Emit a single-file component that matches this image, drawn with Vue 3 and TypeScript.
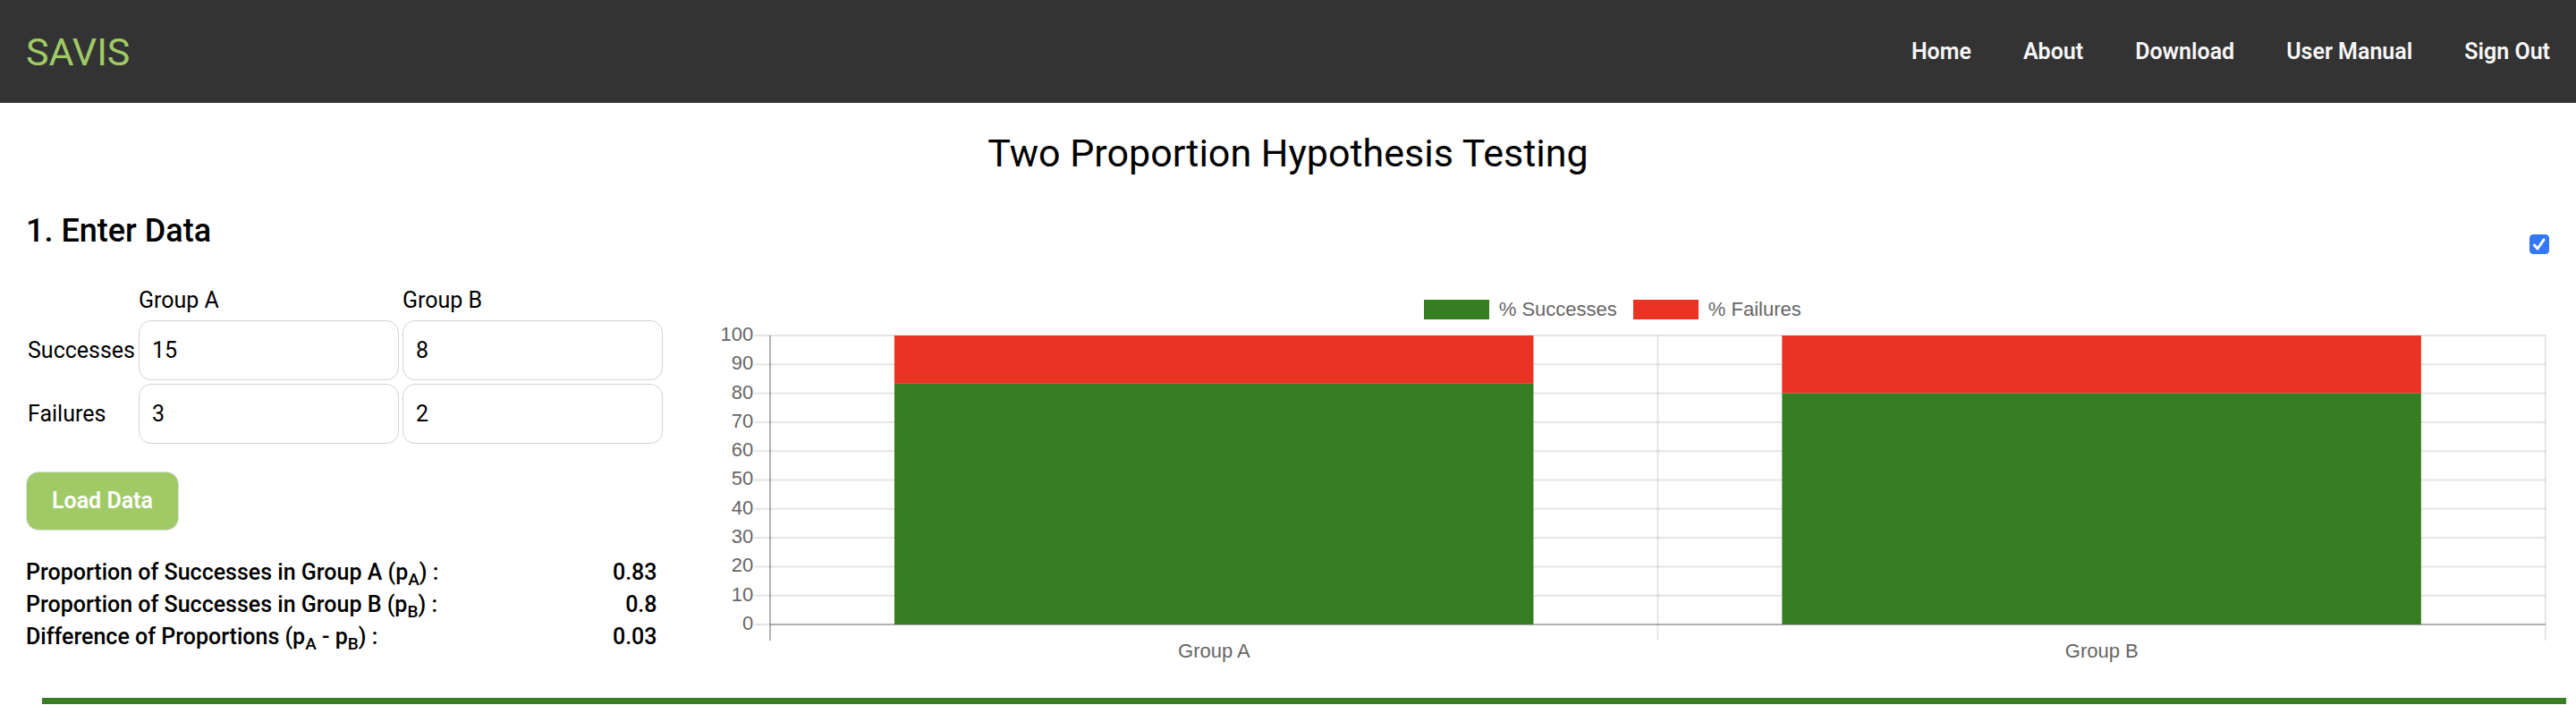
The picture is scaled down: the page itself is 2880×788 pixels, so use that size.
<script setup lang="ts">
import { computed, reactive, ref } from 'vue'

interface Group {
  name: string
  successes: number
  failures: number
}

const links = ['Home', 'About', 'Download', 'User Manual', 'Sign Out']

const groups = reactive<Group[]>([
  { name: 'Group A', successes: 15, failures: 3 },
  { name: 'Group B', successes: 8, failures: 2 },
])
const loaded = ref<Group[]>(groups.map((g) => ({ ...g })))
const showChart = ref(true)

function loadData(): void {
  loaded.value = groups.map((g) => ({ ...g }))
}

function proportion(g: Group): number {
  const total = g.successes + g.failures
  return total ? g.successes / total : 0
}

const round = (n: number): number => Math.round(n * 100) / 100
const pA = computed(() => proportion(loaded.value[0]))
const pB = computed(() => proportion(loaded.value[1]))

const ticks = [100, 90, 80, 70, 60, 50, 40, 30, 20, 10, 0]

// Each category fills half of the plot; its bar takes 72% of that half.
const bars = computed(() =>
  loaded.value.map((g, i) => ({
    name: g.name,
    x: `${i * 50 + 7}%`,
    rest: `${100 - proportion(g) * 100}%`,
    share: `${proportion(g) * 100}%`,
  })),
)
</script>

<template>
  <div class="page">
    <header class="topbar">
      <a class="brand" href="#">SAVIS</a>
      <nav class="links">
        <a v-for="link in links" :key="link" href="#">{{ link }}</a>
      </nav>
    </header>

    <main>
      <h1>Two Proportion Hypothesis Testing</h1>

      <div class="columns">
        <section class="entry">
          <h2>1. Enter Data</h2>
          <table class="data">
            <thead>
              <tr>
                <td></td>
                <th v-for="g in groups" :key="g.name" scope="col">{{ g.name }}</th>
              </tr>
            </thead>
            <tbody>
              <tr>
                <th scope="row">Successes</th>
                <td v-for="g in groups" :key="g.name">
                  <input v-model.number="g.successes" type="text" inputmode="numeric" :aria-label="`${g.name} successes`" />
                </td>
              </tr>
              <tr>
                <th scope="row">Failures</th>
                <td v-for="g in groups" :key="g.name">
                  <input v-model.number="g.failures" type="text" inputmode="numeric" :aria-label="`${g.name} failures`" />
                </td>
              </tr>
            </tbody>
          </table>
          <button type="button" class="load" @click="loadData">Load Data</button>
          <dl class="stats">
            <div>
              <dt>Proportion of Successes in Group A (p<sub>A</sub>) :</dt>
              <dd>{{ round(pA) }}</dd>
            </div>
            <div>
              <dt>Proportion of Successes in Group B (p<sub>B</sub>) :</dt>
              <dd>{{ round(pB) }}</dd>
            </div>
            <div>
              <dt>Difference of Proportions (p<sub>A</sub> - p<sub>B</sub>) :</dt>
              <dd>{{ round(pA - pB) }}</dd>
            </div>
          </dl>
        </section>

        <section class="visual">
          <label class="toggle">
            <input v-model="showChart" type="checkbox" aria-label="Show chart" />
            <svg v-if="showChart" viewBox="0 0 22 22" aria-hidden="true">
              <path d="M5.5 12 9 16 16 6" />
            </svg>
          </label>
          <figure v-if="showChart" class="chart">
            <figcaption class="legend">
              <span class="key"><i class="swatch green"></i>% Successes</span>
              <span class="key"><i class="swatch red"></i>% Failures</span>
            </figcaption>
            <div class="scale">
              <span v-for="t in ticks" :key="t">{{ t }}</span>
            </div>
            <svg class="plot" aria-hidden="true">
              <g class="grid">
                <line
                  v-for="t in ticks"
                  :key="t"
                  :class="{ base: t === 0 }"
                  x1="0"
                  x2="100%"
                  :y1="`${100 - t}%`"
                  :y2="`${100 - t}%`"
                />
                <line v-for="t in ticks" :key="`m${t}`" x1="-18" x2="0" :y1="`${100 - t}%`" :y2="`${100 - t}%`" />
                <line class="base" x1="0" x2="0" y1="0" y2="100%" />
                <line x1="50%" x2="50%" y1="0" y2="100%" />
                <line x1="100%" x2="100%" y1="0" y2="100%" />
              </g>
              <svg y="100%" width="100%" height="18" class="grid marks">
                <line class="base" x1="0" x2="0" y1="0" y2="18" />
                <line x1="50%" x2="50%" y1="0" y2="18" />
                <line x1="100%" x2="100%" y1="0" y2="18" />
              </svg>
              <g v-for="b in bars" :key="b.name">
                <rect class="red" :x="b.x" y="0" width="36%" :height="b.rest" />
                <rect class="green" :x="b.x" :y="b.rest" width="36%" :height="b.share" />
              </g>
            </svg>
            <div class="names">
              <span v-for="b in bars" :key="b.name">{{ b.name }}</span>
            </div>
          </figure>
        </section>
      </div>
    </main>
    <hr class="rule" />
  </div>
</template>

<style>
body {
  margin: 0;
  background: #fff;
}
</style>

<style scoped>
* {
  box-sizing: border-box;
}
.page {
  font: 400 25px/36px Roboto, sans-serif;
  color: #000;
}
.topbar {
  display: flex;
  align-items: center;
  justify-content: space-between;
  padding: 0 29px;
  height: 115px;
  background: #333;
}
.topbar a {
  text-decoration: none;
}
.brand {
  color: #a0ca66;
  font-size: 43px;
}
.links {
  display: flex;
  gap: 58px;
}
.links a {
  color: #f7f7f7;
  font-weight: 600;
}
main {
  padding: 27px 29px 0;
}
h1 {
  margin: 0 0 2px;
  font-size: 43px;
  font-weight: 400;
  line-height: 58px;
  text-align: center;
}
.columns {
  display: grid;
  grid-template-columns: minmax(0, 1fr) minmax(0, 3fr);
}
h2 {
  margin: 31px 0;
  font-size: 36px;
  font-weight: 500;
  line-height: 50px;
}
.data {
  border-spacing: 4px;
  margin: 0 0 0 -2px;
}
.data th,
.data td {
  padding: 0;
  font-weight: 400;
  text-align: left;
}
.data input {
  display: block;
  width: 291px;
  height: 67px;
  padding: 0 14px;
  border: 1px solid #d2d3d8;
  border-radius: 14px;
  background: #fff;
  color: #000;
  font: inherit;
}
.load {
  display: block;
  margin: 27px 0 0;
  padding: 14px 28px;
  border: 1px solid #dedfe6;
  border-radius: 14px;
  background: #a0ca66;
  color: #fff;
  font: inherit;
  font-weight: 600;
}
.stats {
  margin: 29px 0 0;
  font-weight: 500;
}
.stats div {
  display: flex;
  justify-content: space-between;
}
.stats dd {
  margin: 0;
}
.stats sub {
  position: relative;
  bottom: -6px;
  font-size: 19px;
  line-height: 0;
  vertical-align: baseline;
}
.visual {
  padding-top: 60px;
}
.toggle {
  display: grid;
  width: 22px;
  height: 22px;
  margin: 0 1px 0 auto;
}
.toggle input,
.toggle svg {
  grid-area: 1 / 1;
  width: 22px;
  height: 22px;
  margin: 0;
}
.toggle input {
  appearance: none;
  border: 1px solid #767676;
  border-radius: 4px;
}
.toggle input:checked {
  border-color: #3478f6;
  background: #3478f6;
}
.toggle svg {
  pointer-events: none;
}
.toggle path {
  fill: none;
  stroke: #fff;
  stroke-width: 3;
  stroke-linecap: round;
  stroke-linejoin: round;
}
.chart {
  display: grid;
  grid-template-columns: auto 1fr;
  column-gap: 19px;
  margin: 49px 5px 0 71px;
  color: #666;
  font: 22px/26px "Liberation Sans", Arial, sans-serif;
}
.legend {
  grid-column: 1 / -1;
  display: flex;
  justify-content: center;
  gap: 18px;
  margin: 0 0 16px -46px;
}
.key {
  display: flex;
  align-items: center;
  gap: 11px;
}
.swatch {
  width: 73px;
  height: 22px;
}
.swatch.green {
  background: #377e22;
}
.swatch.red {
  background: #eb3323;
}
.scale {
  display: flex;
  flex-direction: column;
  justify-content: space-between;
  margin: -14px 0 -12px;
  text-align: right;
}
.plot {
  width: 100%;
  height: 323px;
  overflow: visible;
}
.grid {
  stroke: rgba(0, 0, 0, 0.1);
  stroke-width: 2;
}
.base {
  stroke: rgba(0, 0, 0, 0.3);
}
.marks {
  overflow: visible;
}
rect.green {
  fill: #377e22;
}
rect.red {
  fill: #eb3323;
}
.names {
  grid-column: 2;
  display: grid;
  grid-template-columns: 1fr 1fr;
  margin-top: 17px;
  text-align: center;
}
.rule {
  height: 7px;
  margin: 39px 11px 1px 47px;
  border: 0;
  background: #377e22;
}
</style>
